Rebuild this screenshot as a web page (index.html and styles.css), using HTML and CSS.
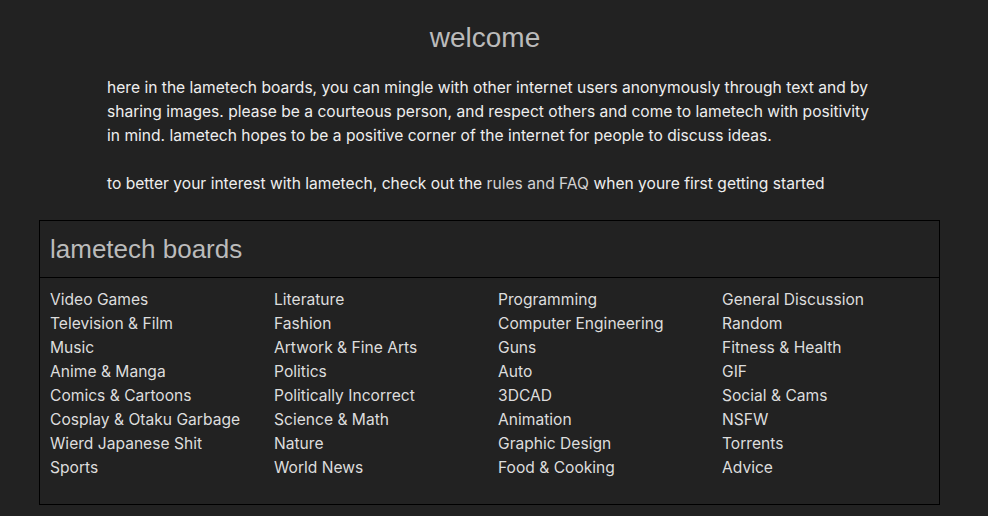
FILE: index.html
```html
<!DOCTYPE html>
<html>
<head>
<meta charset="utf-8">
<link rel="stylesheet" href="styles.css">
</head>
<body>
<div class="page">
  <h1 class="title">welcome</h1>
  <div class="intro">
    <p>here in the lametech boards, you can mingle with other internet users anonymously through text and by sharing images. please be a courteous person, and respect others and come to lametech with positivity in mind. lametech hopes to be a positive corner of the internet for people to discuss ideas.</p>
    <p>to better your interest with lametech, check out the <a href="#" class="link">rules and FAQ</a> when youre first getting started</p>
  </div>
  <section class="boards">
    <h2 class="boards-title">lametech boards</h2>
    <div class="board-grid">
      <ul class="col">
        <li><a href="#">Video Games</a></li>
        <li><a href="#">Television &amp; Film</a></li>
        <li><a href="#">Music</a></li>
        <li><a href="#">Anime &amp; Manga</a></li>
        <li><a href="#">Comics &amp; Cartoons</a></li>
        <li><a href="#">Cosplay &amp; Otaku Garbage</a></li>
        <li><a href="#">Wierd Japanese Shit</a></li>
        <li><a href="#">Sports</a></li>
      </ul>
      <ul class="col">
        <li><a href="#">Literature</a></li>
        <li><a href="#">Fashion</a></li>
        <li><a href="#">Artwork &amp; Fine Arts</a></li>
        <li><a href="#">Politics</a></li>
        <li><a href="#">Politically Incorrect</a></li>
        <li><a href="#">Science &amp; Math</a></li>
        <li><a href="#">Nature</a></li>
        <li><a href="#">World News</a></li>
      </ul>
      <ul class="col">
        <li><a href="#">Programming</a></li>
        <li><a href="#">Computer Engineering</a></li>
        <li><a href="#">Guns</a></li>
        <li><a href="#">Auto</a></li>
        <li><a href="#">3DCAD</a></li>
        <li><a href="#">Animation</a></li>
        <li><a href="#">Graphic Design</a></li>
        <li><a href="#">Food &amp; Cooking</a></li>
      </ul>
      <ul class="col">
        <li><a href="#">General Discussion</a></li>
        <li><a href="#">Random</a></li>
        <li><a href="#">Fitness &amp; Health</a></li>
        <li><a href="#">GIF</a></li>
        <li><a href="#">Social &amp; Cams</a></li>
        <li><a href="#">NSFW</a></li>
        <li><a href="#">Torrents</a></li>
        <li><a href="#">Advice</a></li>
      </ul>
    </div>
  </section>
</div>
</body>
</html>
```

FILE: styles.css
```css
html, body {
  margin: 0;
  padding: 0;
  background: #222222;
}
body {
  font-family: "Inter", "Liberation Sans", sans-serif;
  font-size: 15.6px;
  line-height: 24px;
  color: #eeeeee;
}
.page {
  padding: 22px 48px 0 39px;
}
.title {
  margin: 0 9px 22px 0;
  text-align: center;
  font-family: "Liberation Sans", Arial, sans-serif;
  font-weight: normal;
  font-size: 28px;
  line-height: 32px;
  color: #bbbbbb;
}
.intro {
  padding: 0 66px 0 68px;
}
.intro p {
  margin: 0 0 24px 0;
}
.link {
  color: #d2d2d2;
  text-decoration: none;
}
.boards {
  border: 1px solid #000000;
  margin-top: 0;
}
.boards-title {
  margin: 0;
  padding: 12px 10px 12px 10px;
  font-family: "Liberation Sans", Arial, sans-serif;
  font-weight: normal;
  font-size: 26px;
  line-height: 32px;
  color: #bbbbbb;
  border-bottom: 1px solid #000000;
}
.board-grid {
  display: grid;
  grid-template-columns: repeat(4, 224px);
  padding: 10px 10px 24px 10px;
}
.col {
  list-style: none;
  margin: 0;
  padding: 0;
}
.col a {
  color: #dddddd;
  text-decoration: none;
}
```
